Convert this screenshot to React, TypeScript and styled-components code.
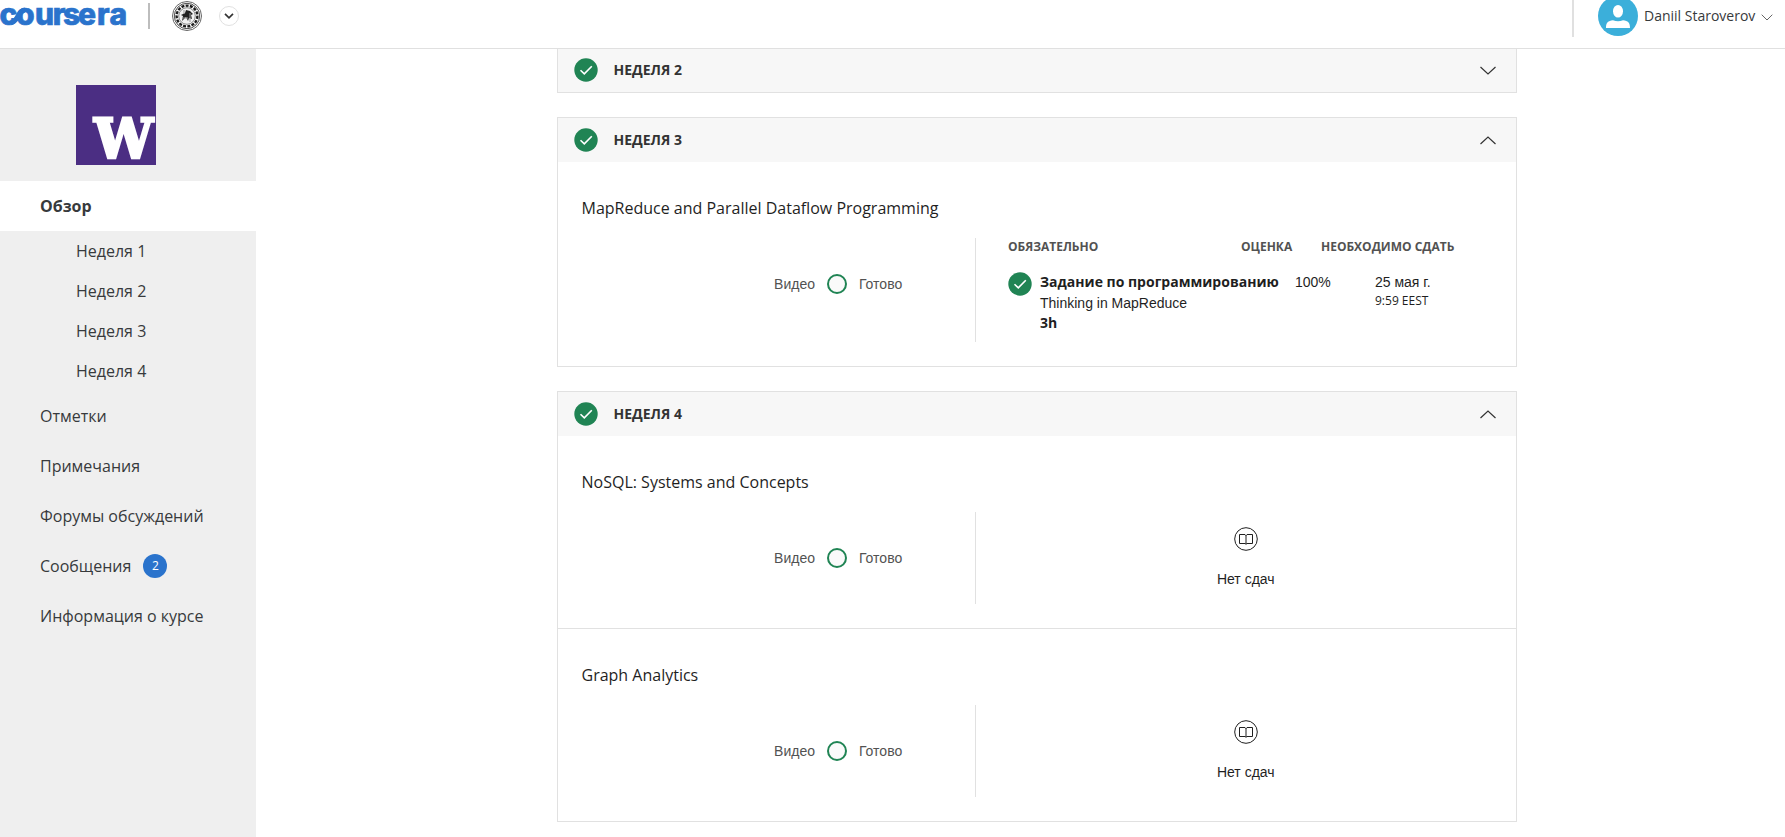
import React from "react";
import styled, { createGlobalStyle } from "styled-components";

const Global = createGlobalStyle`
  *, *::before, *::after { box-sizing: border-box; }
  body { margin: 0; background: #fff; overflow: hidden; font-family: "Open Sans", "Noto Sans", sans-serif; color: #1f1f1f; }
  svg { display: block; flex: none; overflow: visible; }
`;

const Page = styled.div`
  height: 837px;
  display: flex;
  flex-direction: column;
  overflow: hidden;
`;

const Header = styled.header`
  flex: none;
  height: 49px;
  border-bottom: 1px solid #e0e0e0;
  display: flex;
  justify-content: space-between;
  align-items: flex-start;
  background: #fff;
`;

const Brand = styled.div`
  display: flex;
  align-items: center;
  height: 32px;
`;

const BrandRule = styled.span`
  width: 2px;
  height: 26px;
  margin: 0 22px 0 20px;
  background: #bdbdbd;
`;

const MenuButton = styled.button`
  width: 20px;
  height: 20px;
  margin-left: 17px;
  padding: 0;
  border: 1px solid #e1e1e1;
  border-radius: 50%;
  background: #fff;
  display: flex;
  align-items: center;
  justify-content: center;
`;

const Account = styled.div`
  display: flex;
  align-items: center;
  width: 212px;
  height: 37px;
  margin-right: 1px;
  border-left: 2px solid #e0e0e0;
  padding-left: 24px;
  font-size: 14px;
  color: #373a3c;
`;

const AccountInner = styled.div`
  display: flex;
  align-items: center;
  height: 40px;
  margin-top: -5px;
`;

const AccountName = styled.span`
  margin: 0 6px 0 6px;
  line-height: 20px;
  white-space: nowrap;
`;

const AccountArrow = styled.svg`
  margin-top: 3px;
`;

const Body = styled.div`
  flex: 1;
  min-height: 0;
  display: flex;
`;

const Sidebar = styled.nav`
  flex: none;
  width: 256px;
  background: #efefef;
  padding-top: 36px;
  font-size: 16px;
  color: #373a3c;
`;

const CourseLogo = styled.div`
  margin: 0 0 16px 76px;
`;

const NavItem = styled.a<{ $active?: boolean }>`
  display: flex;
  align-items: center;
  height: 50px;
  padding-left: 40px;
  background: ${(p) => (p.$active ? "#fff" : "transparent")};
  font-weight: ${(p) => (p.$active ? 700 : 400)};
`;

const WeekLink = styled.a`
  display: flex;
  align-items: center;
  height: 40px;
  padding-left: 76px;
`;

const Count = styled.span`
  width: 24px;
  height: 24px;
  margin-left: 12px;
  border-radius: 50%;
  background: #2a73cc;
  color: #fff;
  font-size: 12px;
  line-height: 23px;
  text-align: center;
`;

const Main = styled.main`
  flex: 1;
  min-width: 0;
  display: flex;
  flex-direction: column;
  gap: 24px;
  padding: 0 268.5px 0 300.5px;
`;

const Week = styled.section<{ $cut?: boolean }>`
  border: 1px solid #e1e1e1;
  border-top-width: ${(p) => (p.$cut ? 0 : 1)}px;
`;

const WeekHeader = styled.header<{ $cut?: boolean }>`
  display: flex;
  align-items: center;
  height: ${(p) => (p.$cut ? 43 : 44)}px;
  padding: 0 20px ${(p) => (p.$cut ? 1 : 0)}px 16px;
  background: #f7f7f7;
`;

const WeekTitle = styled.h2`
  flex: 1;
  margin: 0 0 0 16px;
  font-size: 14px;
  line-height: 20px;
  font-weight: 700;
  color: #333;
`;

const Module = styled.div`
  padding: 34px 24px 24px;
  & + & {
    border-top: 1px solid #e1e1e1;
  }
`;

const ModuleTitle = styled.h3`
  margin: 0 0 18px;
  font-size: 16px;
  line-height: 24px;
  font-weight: 400;
`;

const Columns = styled.div<{ $height: number }>`
  display: flex;
  height: ${(p) => p.$height}px;
  margin-right: -24px;
`;

const Progress = styled.div`
  flex: none;
  width: 394.5px;
  border-right: 1px solid #e1e1e1;
  padding: 36px 72.8px 0 0;
  display: flex;
  justify-content: flex-end;
  align-items: flex-start;
  gap: 12px;
  font: 14px/20px "Liberation Sans", Arial, sans-serif;
  color: #525252;
`;

const Ring = styled.span`
  width: 20px;
  height: 20px;
  border: 2px solid #208454;
  border-radius: 50%;
  background: #fafafa;
`;

const Assignments = styled.div`
  flex: 1;
  padding: 1px 0 0 32px;
`;

const ColumnHeads = styled.div`
  display: grid;
  grid-template-columns: 233px 80px 1fr;
  font-size: 12px;
  line-height: 16px;
  font-weight: 700;
  color: #525252;
`;

const Assignment = styled.div`
  display: flex;
  margin-top: 17px;
`;

const AssignmentText = styled.div`
  width: 255px;
  margin-left: 8px;
  font-size: 14px;
  line-height: 20px;
`;

const AssignmentKind = styled.div`
  height: 21px;
  font-weight: 700;
  white-space: nowrap;
`;

const Plain = styled.div`
  font: 14px/20px "Liberation Sans", Arial, sans-serif;
`;

const Due = styled.div`
  font-size: 12px;
  line-height: 18px;
`;

const Grade = styled(Plain)`
  width: 80px;
`;

const Empty = styled.div`
  flex: 1;
  display: flex;
  flex-direction: column;
  align-items: center;
  padding-top: 15px;
  gap: 18px;
  font: 14px/20px "Liberation Sans", Arial, sans-serif;
`;

const Wordmark = () => (
  <svg width="128" height="32" viewBox="0 0 128 32" role="img" aria-label="coursera">
    <text
      y="24.700"
      x="-0.500 16 35 52.700 63 78 97 109.500"
      fontFamily="Inter, sans-serif"
      fontWeight="800"
      fontSize="30"
      fill="#2a73cc"
      stroke="#2a73cc"
      strokeWidth="0.700"
    >
      coursera
    </text>
    <path d="M11 22.800C18 22 17.500 10.500 25 10" fill="none" stroke="#2a73cc" strokeWidth="4.800" />
  </svg>
);

const Seal = () => (
  <svg width="30" height="30" viewBox="0 0 30 30">
    <circle cx="15" cy="15" r="14.500" fill="#fff" stroke="#666" strokeWidth="1" />
    <circle cx="15" cy="15" r="12.700" fill="none" stroke="#333" strokeWidth="0.900" />
    <circle cx="15" cy="15" r="10.400" fill="none" stroke="#1d1d1d" strokeWidth="2.400" strokeDasharray="3 1.300" />
    <circle cx="15" cy="15" r="8.300" fill="#f1f1f1" stroke="#555" strokeWidth="0.700" />
    <path d="M14 9l4 1 3 3-2 1 1 4-3-1-1 3-2-4-4 4 1-5-2-1 4-2z" fill="#222" />
    <path d="M12 9v4M18 12v9M10 17h6" stroke="#999" strokeWidth="1" />
  </svg>
);

const Avatar = () => (
  <svg width="40" height="40" viewBox="0 0 40 40">
    <circle cx="20" cy="20" r="20" fill="#3bafda" />
    <ellipse cx="20" cy="15.300" rx="5" ry="6.300" fill="#fff" />
    <path d="M8 32c0-6 2-7 7-7.800q5 2 10 0c5 .8 7 1.800 7 7.800z" fill="#fff" />
  </svg>
);

const UniversityLogo = () => (
  <svg width="80" height="80" viewBox="0 0 80 80">
    <rect width="80" height="80" fill="#4b2e83" />
    <text
      transform="translate(18.300 72.800) scale(0.970 1)"
      fontFamily="DejaVu Serif, serif"
      fontWeight="700"
      fontSize="54"
      fill="#fff"
      stroke="#fff"
      strokeWidth="3"
    >
      W
    </text>
  </svg>
);

const Check = () => (
  <svg width="24" height="24" viewBox="0 0 24 24">
    <circle cx="12" cy="12" r="11.700" fill="#208454" />
    <path d="M6.500 12.200l3.800 3.700 7.500-7.700" fill="none" stroke="#fff" strokeWidth="1.600" />
  </svg>
);

const Chevron = ({ up = false }: { up?: boolean }) => (
  <svg width="16" height="9" viewBox="0 0 16 9">
    <path d={up ? "M.5 8L8 1l7.500 7" : "M.5 1L8 8l7.500-7"} fill="none" stroke="#333" strokeWidth="1.200" />
  </svg>
);

const Book = () => (
  <svg width="24" height="24" viewBox="0 0 24 24" fill="none" stroke="#1f1f1f">
    <circle cx="12" cy="12" r="11.300" />
    <path d="M5.500 7.500v9h5.500l1 .8 1-.8h5.500v-9h-5.500l-1 1-1-1zM12 8v9" />
  </svg>
);

const VideoProgress = () => (
  <Progress>
    <span>Видео</span>
    <Ring />
    <span>Готово</span>
  </Progress>
);

const EmptyModule = ({ title }: { title: string }) => (
  <Module>
    <ModuleTitle>{title}</ModuleTitle>
    <Columns $height={92}>
      <VideoProgress />
      <Empty>
        <Book />
        <span>Нет сдач</span>
      </Empty>
    </Columns>
  </Module>
);

export default function App() {
  return (
    <Page>
      <Global />
      <Header>
        <Brand>
          <Wordmark />
          <BrandRule />
          <Seal />
          <MenuButton aria-label="Меню">
            <svg width="10" height="6" viewBox="0 0 10 6">
              <path d="M1 .8l4 4 4-4" fill="none" stroke="#333" strokeWidth="1.700" />
            </svg>
          </MenuButton>
        </Brand>
        <Account>
          <AccountInner>
            <Avatar />
            <AccountName>Daniil Staroverov</AccountName>
            <AccountArrow width="12" height="7" viewBox="0 0 12 7">
              <path d="M.7.700L6 6l5.300-5.300" fill="none" stroke="#666" />
            </AccountArrow>
          </AccountInner>
        </Account>
      </Header>
      <Body>
        <Sidebar>
          <CourseLogo>
            <UniversityLogo />
          </CourseLogo>
          <NavItem $active>Обзор</NavItem>
          {[1, 2, 3, 4].map((n) => (
            <WeekLink key={n}>Неделя {n}</WeekLink>
          ))}
          <NavItem>Отметки</NavItem>
          <NavItem>Примечания</NavItem>
          <NavItem>Форумы обсуждений</NavItem>
          <NavItem>
            Сообщения<Count>2</Count>
          </NavItem>
          <NavItem>Информация о курсе</NavItem>
        </Sidebar>
        <Main>
          <Week $cut>
            <WeekHeader $cut>
              <Check />
              <WeekTitle>НЕДЕЛЯ 2</WeekTitle>
              <Chevron />
            </WeekHeader>
          </Week>
          <Week>
            <WeekHeader>
              <Check />
              <WeekTitle>НЕДЕЛЯ 3</WeekTitle>
              <Chevron up />
            </WeekHeader>
            <Module>
              <ModuleTitle>MapReduce and Parallel Dataflow Programming</ModuleTitle>
              <Columns $height={104}>
                <VideoProgress />
                <Assignments>
                  <ColumnHeads>
                    <span>ОБЯЗАТЕЛЬНО</span>
                    <span>ОЦЕНКА</span>
                    <span>НЕОБХОДИМО СДАТЬ</span>
                  </ColumnHeads>
                  <Assignment>
                    <Check />
                    <AssignmentText>
                      <AssignmentKind>Задание по программированию</AssignmentKind>
                      <Plain>Thinking in MapReduce</Plain>
                      <b>3h</b>
                    </AssignmentText>
                    <Grade>100%</Grade>
                    <div>
                      <Plain>25 мая г.</Plain>
                      <Due>9:59 EEST</Due>
                    </div>
                  </Assignment>
                </Assignments>
              </Columns>
            </Module>
          </Week>
          <Week>
            <WeekHeader>
              <Check />
              <WeekTitle>НЕДЕЛЯ 4</WeekTitle>
              <Chevron up />
            </WeekHeader>
            <EmptyModule title="NoSQL: Systems and Concepts" />
            <EmptyModule title="Graph Analytics" />
          </Week>
        </Main>
      </Body>
    </Page>
  );
}
